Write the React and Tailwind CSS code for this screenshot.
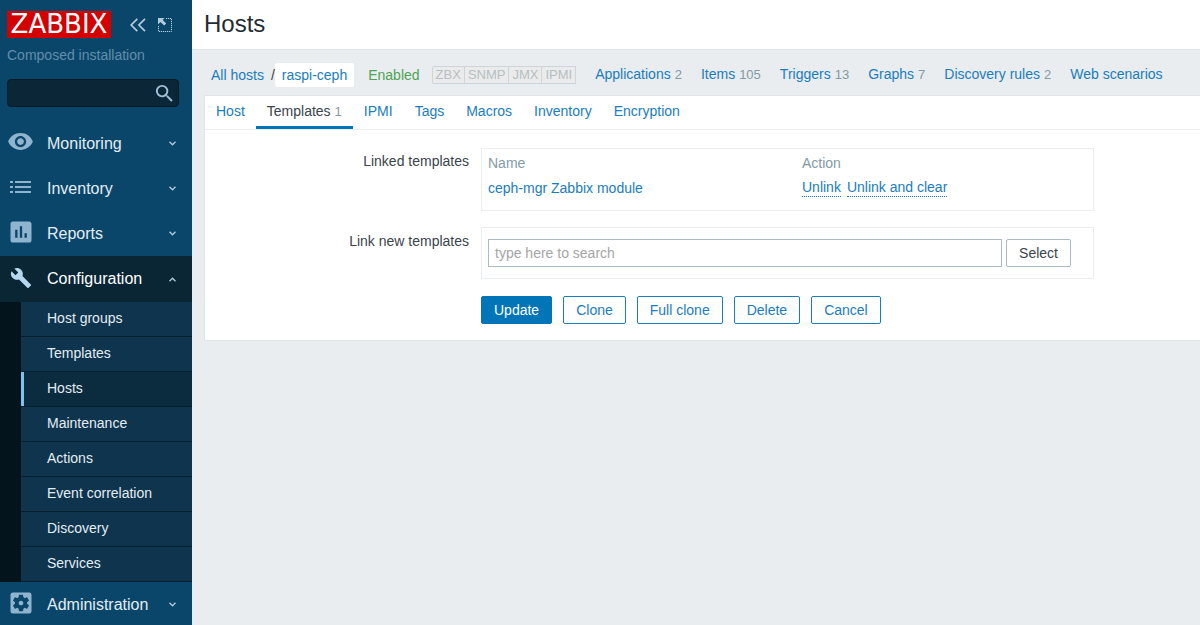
import React, { useState } from "react";
import {
    MdVisibility,
    MdAssessment,
    MdBuild,
    MdSettingsApplications,
    MdSearch,
} from "react-icons/md";

const ListIcon = () => (
    <svg width="21" height="12" viewBox="0 0 21 12" fill="currentColor">
        <path d="M0 0h3v2H0zM5 0h16v2H5zM0 5h3v2H0zM5 5h16v2H5zM0 10h3v2H0zM5 10h16v2H5z" />
    </svg>
);

const Chevron = ({ up }) => (
    <svg width="7" height="5" viewBox="0 0 7 5" fill="none" stroke="#b4cbdb" strokeWidth="1.3">
        <path d={up ? "M0.5 4.3L3.5 1.2L6.5 4.3" : "M0.5 0.7L3.5 3.8L6.5 0.7"} />
    </svg>
);

const menuTop = [
    { label: "Monitoring", icon: <MdVisibility size={27} /> },
    { label: "Inventory", icon: <ListIcon /> },
    { label: "Reports", icon: <MdAssessment size={28} /> },
];

const configItems = [
    "Host groups",
    "Templates",
    "Hosts",
    "Maintenance",
    "Actions",
    "Event correlation",
    "Discovery",
    "Services",
];

const hostLinks = [
    { label: "Applications", count: 2 },
    { label: "Items", count: 105 },
    { label: "Triggers", count: 13 },
    { label: "Graphs", count: 7 },
    { label: "Discovery rules", count: 2 },
    { label: "Web scenarios" },
];

const interfaces = ["ZBX", "SNMP", "JMX", "IPMI"];

const tabs = [
    { label: "Host" },
    { label: "Templates", count: 1 },
    { label: "IPMI" },
    { label: "Tags" },
    { label: "Macros" },
    { label: "Inventory" },
    { label: "Encryption" },
];

const MenuButton = ({ label, icon }) => (
    <button
        type="button"
        className="flex h-[45px] w-full shrink-0 items-center pr-4 text-left text-[#e3edf4]"
    >
        <span className="flex w-[41px] shrink-0 justify-center pb-1 text-[#8fb4cd]">{icon}</span>
        <span className="flex-1 pl-1.5 text-base">{label}</span>
        <Chevron />
    </button>
);

const Sidebar = () => (
    <aside className="sticky top-0 flex h-screen w-48 shrink-0 flex-col overflow-hidden bg-[#0a466a]">
        <div className="h-[121px] shrink-0 px-[7px] pt-[11px]">
            <div className="flex items-center">
                <a
                    href="#dashboard"
                    className="flex h-[27px] w-[104px] items-center justify-center bg-[#d40000] font-['DejaVu_Sans',sans-serif] text-[26px] leading-[27px] text-white"
                >
                    ZABBIX
                </a>
                <button type="button" aria-label="Collapse sidebar" className="ml-[19px] text-[#b4cbdb]">
                    <svg width="16" height="14" viewBox="0 0 16 14" fill="none" stroke="currentColor" strokeWidth="1.7">
                        <path d="M7.3 0.8L1.2 7L7.3 13.2M15 0.8L8.9 7L15 13.2" />
                    </svg>
                </button>
                <button type="button" aria-label="Hide sidebar" className="ml-3 text-[#b4cbdb]">
                    <svg width="14" height="14" viewBox="0 0 14 14" fill="none" stroke="currentColor">
                        <path d="M8 0.5H13.5V13.5H0.5V8" strokeDasharray="1.2 0.8" />
                        <path d="M0 0H6.5L4.7 1.9L8.2 5.4L6.2 7.6L2.4 4L0 6.5Z" fill="currentColor" stroke="none" />
                    </svg>
                </button>
            </div>
            <p className="mt-[7px] text-sm leading-5 text-[#638eaa]">Composed installation</p>
            <form className="mt-3.5 flex h-7 w-[172px] items-center rounded-sm border border-[#041a28] bg-[#0b2637] pr-0.5">
                <input
                    type="text"
                    aria-label="Search"
                    className="h-full min-w-0 flex-1 bg-transparent px-1.5 text-sm text-white outline-none"
                />
                <button type="button" aria-label="Run search" className="text-[#9fc0d6]">
                    <MdSearch size={23} />
                </button>
            </form>
        </div>

        {menuTop.map((item) => (
            <MenuButton key={item.label} {...item} />
        ))}

        <button
            type="button"
            className="flex h-[46px] w-full shrink-0 items-center bg-[#0a2635] pr-4 text-left text-white"
        >
            <span className="flex w-[41px] shrink-0 justify-center pb-0.5 text-[#b5d8f0]">
                <MdBuild size={22} />
            </span>
            <span className="flex-1 pl-1.5 text-base">Configuration</span>
            <Chevron up />
        </button>
        <nav className="shrink-0 bg-[#04141d] pl-[21px]">
            {configItems.map((item) => (
                <a
                    key={item}
                    href={`#${item}`}
                    className={`flex h-[35px] items-center border-b border-[#062030] pb-0.5 pl-[26px] text-sm text-[#e3edf4] ${
                        item === "Hosts" ? "bg-[#0b2b3e] shadow-[inset_3px_0_0_#78c4f5]" : "bg-[#0f344d]"
                    }`}
                >
                    {item}
                </a>
            ))}
        </nav>

        <MenuButton label="Administration" icon={<MdSettingsApplications size={28} />} />
    </aside>
);

const HostNav = () => (
    <nav className="flex h-[45px] items-center overflow-hidden pt-1 pl-[7px] text-sm whitespace-nowrap text-[#1a7dbc]">
        <a href="#all-hosts">All hosts</a>
        <span className="pl-[7px] text-[#3a444a]">/</span>
        <a href="#raspi-ceph" className="flex h-6 items-center rounded-xs bg-white px-[7px]">
            raspi-ceph
        </a>
        <span className="ml-3.5 text-[#4fa354]">Enabled</span>
        <div className="ml-3 flex rounded-xs border-l border-[#ccd5d9] text-[13px] leading-4 text-[#b4bfc4]">
            {interfaces.map((name) => (
                <span key={name} className="border-y border-r border-[#ccd5d9] bg-[#ebebeb] px-[3px]">
                    {name}
                </span>
            ))}
        </div>
        <ul className="ml-[19px] flex gap-[19px]">
            {hostLinks.map(({ label, count }) => (
                <li key={label}>
                    <a href={`#${label}`}>{label}</a>
                    {count && <span className="pl-1 text-[13px] text-[#849aa5]">{count}</span>}
                </li>
            ))}
        </ul>
    </nav>
);

const OutlineButton = ({ children }) => (
    <button
        type="button"
        className="h-7 rounded-xs border border-[#1a7dbc] bg-white px-3 text-[#1a7dbc] hover:bg-[#e0f1fb]"
    >
        {children}
    </button>
);

const TemplatesForm = () => {
    const [search, setSearch] = useState("");

    return (
        <form className="pt-[18px] pb-4 text-[#3a444a]">
            {/* LINKED TEMPLATES */}
            <div className="flex gap-3">
                <div className="w-[264px] shrink-0 pt-[3px] text-right">Linked templates</div>
                <div className="h-[63px] max-w-[613px] flex-1 border border-[#ebeef0] px-1.5 pt-px">
                    <table className="w-full table-fixed text-left">
                        <thead>
                            <tr className="h-[25px] text-[#849aa5]">
                                <th className="w-[314px] font-normal">Name</th>
                                <th className="font-normal">Action</th>
                            </tr>
                        </thead>
                        <tbody>
                            <tr className="h-[25px] text-[#1a7dbc]">
                                <td>
                                    <a href="#template">ceph-mgr Zabbix module</a>
                                </td>
                                <td>
                                    <div className="flex gap-1.5 leading-[17px]">
                                        <button type="button" className="border-b border-dotted border-[#1a7dbc]">
                                            Unlink
                                        </button>
                                        <button type="button" className="border-b border-dotted border-[#1a7dbc]">
                                            Unlink and clear
                                        </button>
                                    </div>
                                </td>
                            </tr>
                        </tbody>
                    </table>
                </div>
            </div>

            {/* LINK NEW TEMPLATES */}
            <div className="mt-4 flex gap-3">
                <label htmlFor="new-templates" className="w-[264px] shrink-0 pt-1 text-right">
                    Link new templates
                </label>
                <div className="flex max-w-[613px] flex-1 gap-1 border border-[#ebeef0] py-[11px] pr-[22px] pl-1.5">
                    <input
                        id="new-templates"
                        type="text"
                        value={search}
                        onChange={(e) => setSearch(e.target.value)}
                        placeholder="type here to search"
                        className="h-7 min-w-0 flex-1 border border-[#acbbc2] px-1.5 outline-none placeholder:text-[#a5a5a5]"
                    />
                    <button type="button" className="h-7 rounded-xs border border-[#acbbc2] px-3">
                        Select
                    </button>
                </div>
            </div>

            <div className="mt-[17px] flex gap-[11px] pl-[276px]">
                <button
                    type="button"
                    className="h-7 rounded-xs border border-[#0275b8] bg-[#0275b8] px-3 text-white"
                >
                    Update
                </button>
                <OutlineButton>Clone</OutlineButton>
                <OutlineButton>Full clone</OutlineButton>
                <OutlineButton>Delete</OutlineButton>
                <OutlineButton>Cancel</OutlineButton>
            </div>
        </form>
    );
};

const App = () => {
    const [activeTab, setActiveTab] = useState("Templates");

    return (
        <div className="flex min-h-screen bg-[#e9edf0] font-['Liberation_Sans',Arial,sans-serif] text-sm">
            <Sidebar />
            <main className="min-w-0 flex-1">
                <header className="flex h-[50px] items-center border-b border-[#dfe4e7] bg-white pb-0.5 pl-3">
                    <h1 className="text-2xl text-[#1f2c33]">Hosts</h1>
                </header>
                <div className="pl-3">
                    <HostNav />
                    <section className="border-y border-l border-[#dfe4e7] bg-white">
                        <div role="tablist" className="flex h-[34px] border-b border-[#ebeef0]">
                            {tabs.map(({ label, count }) => (
                                <button
                                    key={label}
                                    type="button"
                                    role="tab"
                                    aria-selected={activeTab === label}
                                    onClick={() => setActiveTab(label)}
                                    className={`border-b-3 px-[11px] ${
                                        activeTab === label
                                            ? "border-[#0275b8] text-[#3a444a]"
                                            : "border-transparent text-[#1a7dbc]"
                                    }`}
                                >
                                    {label}
                                    {count && <span className="pl-1 text-[13px] text-[#849aa5]">{count}</span>}
                                </button>
                            ))}
                        </div>
                        <TemplatesForm />
                    </section>
                </div>
            </main>
        </div>
    );
};

export default App;
